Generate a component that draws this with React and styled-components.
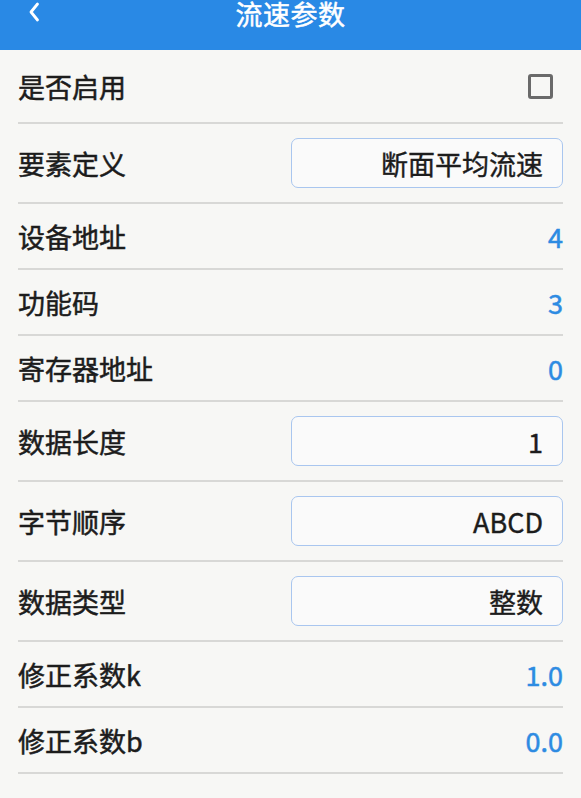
import React from "react";
import styled, { createGlobalStyle } from "styled-components";

const GlobalStyle = createGlobalStyle`
  html, body {
    margin: 0;
    padding: 0;
    background: #f7f7f5;
  }
  body {
    font-family: "Noto Sans CJK SC", "Noto Sans", sans-serif;
  }
`;

const rows = [
  { label: "是否启用", type: "check" },
  { label: "要素定义", type: "input", value: "断面平均流速" },
  { label: "设备地址", type: "text", value: "4" },
  { label: "功能码", type: "text", value: "3" },
  { label: "寄存器地址", type: "text", value: "0" },
  { label: "数据长度", type: "input", value: "1" },
  { label: "字节顺序", type: "input", value: "ABCD" },
  { label: "数据类型", type: "input", value: "整数" },
  { label: "修正系数k", type: "text", value: "1.0" },
  { label: "修正系数b", type: "text", value: "0.0" },
];

const App = () => {
  return (
    <StyledPage>
      <GlobalStyle />
      <StyledHeader>
        <StyledBack>
          <svg width="13" height="20" viewBox="0 0 13 20">
            <path d="M9.5 2 L3 10 L9.5 18" fill="none" stroke="#fff" strokeWidth="2.8" strokeLinecap="round" strokeLinejoin="round" />
          </svg>
        </StyledBack>
        <StyledTitle>流速参数</StyledTitle>
      </StyledHeader>
      <StyledList>
        {rows.map((row) => (
          <StyledRow key={row.label} $kind={row.type}>
            <StyledLabel>{row.label}</StyledLabel>
            {row.type === "check" && <StyledCheck />}
            {row.type === "input" && <StyledField>{row.value}</StyledField>}
            {row.type === "text" && <StyledValue>{row.value}</StyledValue>}
          </StyledRow>
        ))}
      </StyledList>
    </StyledPage>
  );
};

const StyledPage = styled.div`
  width: 581px;
  min-height: 798px;
  background: #f7f7f5;
`;

const StyledHeader = styled.div`
  position: relative;
  display: flex;
  justify-content: center;
  align-items: flex-start;
  height: 50px;
  background: #2989e5;
`;

const StyledBack = styled.div`
  position: absolute;
  left: 28px;
  top: 2px;
  display: flex;
`;

const StyledTitle = styled.div`
  margin-top: 0;
  color: #ffffff;
  font-size: 27px;
  font-weight: 400;
  -webkit-text-stroke: 0.5px #ffffff;
  line-height: 28px;
  letter-spacing: 0.5px;
`;

const StyledList = styled.div`
  padding: 0 18px;
`;

const StyledRow = styled.div`
  display: flex;
  align-items: center;
  justify-content: space-between;
  height: ${(p) => (p.$kind === "check" ? "72px" : p.$kind === "input" ? "78px" : "64px")};
  border-bottom: 2px solid #d8d8d6;
`;

const StyledLabel = styled.div`
  color: #1c1c1c;
  font-size: 27px;
  font-weight: 400;
  -webkit-text-stroke: 0.5px #1c1c1c;
  line-height: 1;
`;

const StyledCheck = styled.div`
  box-sizing: border-box;
  width: 25px;
  height: 25px;
  margin-right: 10px;
  border: 3px solid #6a6a6a;
  border-radius: 3px;
`;

const StyledField = styled.div`
  box-sizing: border-box;
  display: flex;
  align-items: center;
  justify-content: flex-end;
  width: 272px;
  height: 50px;
  padding-right: 19px;
  border: 1.5px solid #a9c6ef;
  border-radius: 7px;
  background: #fafafa;
  color: #1c1c1c;
  font-size: 27px;
  font-weight: 400;
  -webkit-text-stroke: 0.4px #1c1c1c;
`;

const StyledValue = styled.div`
  color: #2d8be2;
  font-size: 27px;
  font-weight: 400;
  -webkit-text-stroke: 0.5px #2d8be2;
  line-height: 1;
`;

export default App;
